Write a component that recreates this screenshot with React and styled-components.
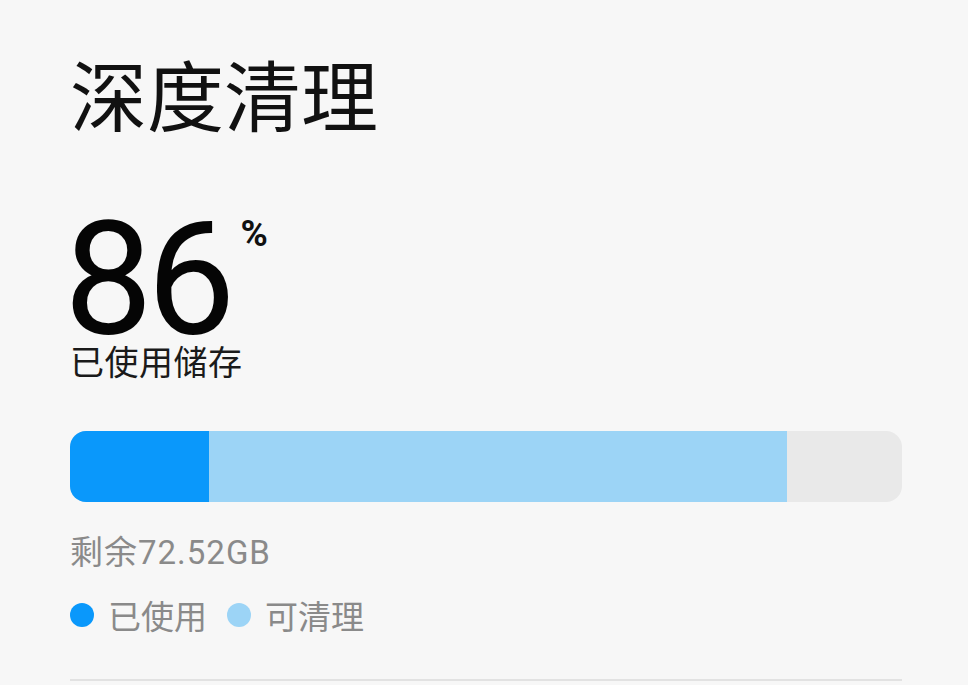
import React from "react";
import styled, { createGlobalStyle } from "styled-components";

const GlobalStyle = createGlobalStyle`
  html, body {
    margin: 0;
    padding: 0;
    background: #f7f7f7;
  }
  body {
    font-family: "Noto Sans CJK SC", "Noto Sans", sans-serif;
  }
`;

const Page = styled.div`
  width: 968px;
  height: 685px;
  box-sizing: border-box;
  padding: 43px 66px 0 70px;
  overflow: hidden;
  display: flex;
  flex-direction: column;
`;

const Title = styled.h1`
  margin: 0;
  font-size: 77px;
  font-weight: 400;
  line-height: 100px;
  color: #111;
  letter-spacing: 0;
`;

const UsageRow = styled.div`
  display: flex;
  align-items: flex-start;
  margin-top: 77px;
  height: 119px;
`;

const Percent = styled.span`
  font-family: "Roboto", "Noto Sans", sans-serif;
  font-size: 158px;
  font-weight: 400;
  line-height: 119px;
  letter-spacing: -6px;
  color: #050505;
  margin-left: -6px;
`;

const PercentSign = styled.span`
  font-family: "Roboto", sans-serif;
  font-size: 37px;
  font-weight: 700;
  line-height: 40px;
  margin-left: 11px;
  margin-top: -6px;
  color: #111;
`;

const UsageLabel = styled.div`
  font-size: 34px;
  line-height: 44px;
  color: #1a1a1a;
  letter-spacing: 0.5px;
`;

const Bar = styled.div`
  display: flex;
  height: 71px;
  margin-top: 48px;
  border-radius: 16px;
  overflow: hidden;
  background: #e9e9e9;
`;

const Segment = styled.div`
  height: 100%;
  background: ${(p) => p.$color};
`;

const Remaining = styled.div`
  font-family: "Roboto", "Noto Sans CJK SC", sans-serif;
  font-size: 33px;
  line-height: 40px;
  color: #8a8a8a;
  margin-top: 31px;
  letter-spacing: 1px;
`;

const Legend = styled.div`
  display: flex;
  align-items: center;
  margin-top: 20px;
`;

const LegendItem = styled.div`
  display: flex;
  align-items: center;
  margin-right: 20px;
  font-size: 33px;
  line-height: 44px;
  color: #8a8a8a;
`;

const Dot = styled.span`
  width: 24px;
  height: 24px;
  border-radius: 50%;
  background: ${(p) => p.$color};
  margin-right: 14px;
`;

const Divider = styled.div`
  margin-top: 42px;
  height: 2px;
  background: #e2e2e2;
`;

const used = 139 / 832;
const cleanable = 578 / 832;

export default function App() {
  return (
    <>
      <GlobalStyle />
      <Page>
        <Title>深度清理</Title>
        <UsageRow>
          <Percent>86</Percent>
          <PercentSign>%</PercentSign>
        </UsageRow>
        <UsageLabel>已使用储存</UsageLabel>
        <Bar>
          <Segment $color="#0a98fb" style={{ width: `${used * 100}%` }} />
          <Segment $color="#9cd4f6" style={{ width: `${cleanable * 100}%` }} />
        </Bar>
        <Remaining>剩余72.52GB</Remaining>
        <Legend>
          <LegendItem>
            <Dot $color="#0a98fb" />
            已使用
          </LegendItem>
          <LegendItem>
            <Dot $color="#9cd4f6" />
            可清理
          </LegendItem>
        </Legend>
        <Divider />
      </Page>
    </>
  );
}
